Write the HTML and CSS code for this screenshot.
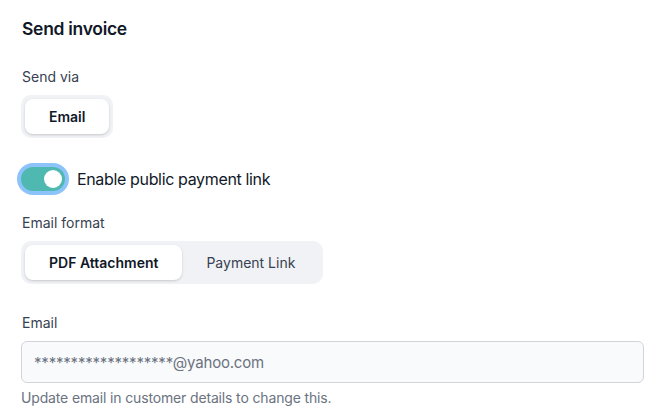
FILE: index.html
```html
<!DOCTYPE html>
<html lang="en">
<head>
<meta charset="utf-8">
<title>Send invoice</title>
<link rel="stylesheet" href="styles.css">
</head>
<body>
<div class="panel">
  <h2 class="title">Send invoice</h2>

  <div class="label label-first">Send via</div>
  <div class="segmented">
    <button class="seg seg-active">Email</button>
  </div>

  <label class="toggle-row">
    <span class="toggle"><span class="knob"></span></span>
    <span class="toggle-text">Enable public payment link</span>
  </label>

  <div class="label label-format">Email format</div>
  <div class="segmented">
    <button class="seg seg-active">PDF Attachment</button>
    <button class="seg">Payment Link</button>
  </div>

  <div class="label label-email">Email</div>
  <div class="input">*******************@yahoo.com</div>
  <div class="help">Update email in customer details to change this.</div>
</div>
</body>
</html>
```
FILE: styles.css
```css
* { box-sizing: border-box; }
html, body { margin: 0; padding: 0; background: #ffffff; }
body {
  font-family: Inter, "Noto Sans", "Liberation Sans", sans-serif;
  color: #111827;
}
.panel {
  display: flex;
  flex-direction: column;
  align-items: flex-start;
  padding: 15px 10px 0 21px;
}
.title {
  margin: 0 0 0 1px;
  font-size: 17.5px;
  line-height: 28px;
  font-weight: 600;
  letter-spacing: -0.3px;
  color: #111827;
}
.label {
  margin-left: 1px;
  font-size: 14px;
  line-height: 20px;
  color: #374151;
}
.label-first { margin-top: 24px; }
.label-format { margin-top: 22px; }
.label-email { margin-top: 29px; }
.segmented {
  display: flex;
  margin-top: 8px;
  padding: 4px;
  background: #f1f2f5;
  border-radius: 10px;
}
.seg {
  font-family: inherit;
  border: 0;
  background: transparent;
  height: 35px;
  padding: 0 24px;
  font-size: 14px;
  color: #374151;
  border-radius: 8px;
  cursor: pointer;
}
.seg-active {
  background: #ffffff;
  color: #111827;
  font-weight: 600;
  box-shadow: 0 1px 3px rgba(0,0,0,0.12), 0 1px 2px rgba(0,0,0,0.06);
}
.toggle-row {
  display: flex;
  align-items: center;
  gap: 12px;
  margin-top: 29px;
}
.toggle {
  display: flex;
  align-items: center;
  justify-content: flex-end;
  width: 44px;
  height: 24px;
  padding: 3px;
  border-radius: 12px;
  background: #4fb9b1;
  box-shadow: 0 0 0 4px #8cc3fb;
}
.knob {
  width: 18px;
  height: 18px;
  border-radius: 50%;
  background: #ffffff;
}
.toggle-text {
  font-size: 16px;
  line-height: 24px;
  letter-spacing: -0.35px;
  color: #111827;
}
.input {
  align-self: stretch;
  margin-top: 8px;
  margin-right: 0;
  height: 42px;
  padding: 0 12px;
  display: flex;
  align-items: center;
  background: #f9fafb;
  border: 1px solid #d1d5db;
  border-radius: 6px;
  font-size: 15px;
  letter-spacing: -0.2px;
  color: #6b7280;
}
.help {
  margin-top: 5px;
  font-size: 14px;
  line-height: 20px;
  letter-spacing: -0.15px;
  color: #6b7280;
}
```
